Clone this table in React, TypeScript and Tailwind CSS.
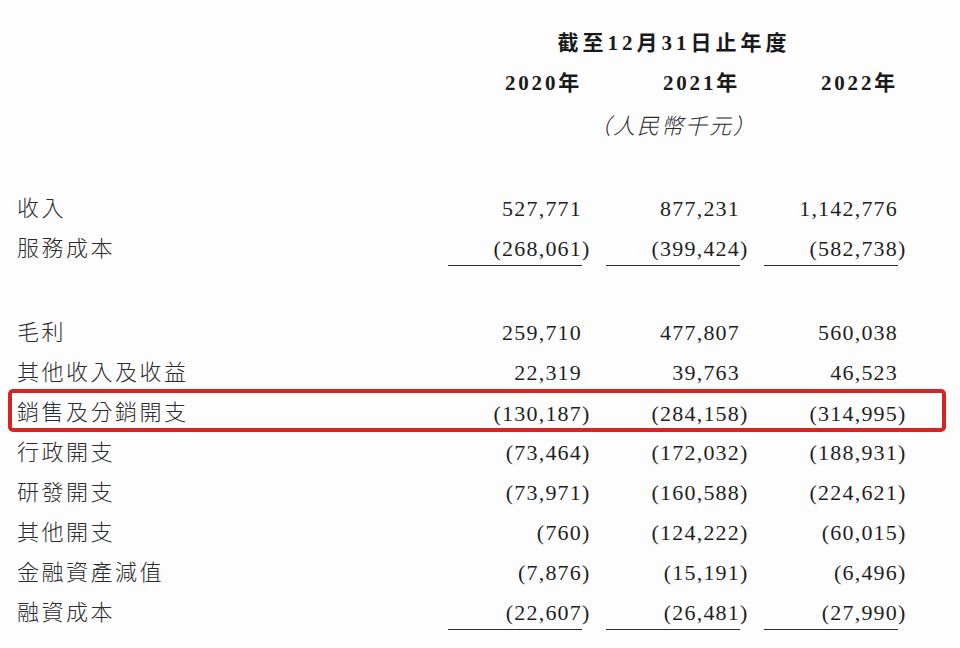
const serif = "font-['Liberation_Serif','Noto_Sans_CJK_TC',serif]";
const sans = "font-['Noto_Sans_CJK_TC','Noto_Sans_CJK_SC',sans-serif]";

type Row = {
  label: string;
  values: string[];
  underline?: boolean;
  highlight?: boolean;
};

const top: Row[] = [
  { label: "收入", values: ["527,771", "877,231", "1,142,776"] },
  { label: "服務成本", values: ["(268,061)", "(399,424)", "(582,738)"], underline: true },
];

const rest: Row[] = [
  { label: "毛利", values: ["259,710", "477,807", "560,038"] },
  { label: "其他收入及收益", values: ["22,319", "39,763", "46,523"] },
  { label: "銷售及分銷開支", values: ["(130,187)", "(284,158)", "(314,995)"], highlight: true },
  { label: "行政開支", values: ["(73,464)", "(172,032)", "(188,931)"] },
  { label: "研發開支", values: ["(73,971)", "(160,588)", "(224,621)"] },
  { label: "其他開支", values: ["(760)", "(124,222)", "(60,015)"] },
  { label: "金融資產減值", values: ["(7,876)", "(15,191)", "(6,496)"] },
  { label: "融資成本", values: ["(22,607)", "(26,481)", "(27,990)"], underline: true },
];

function Cell({ value, underline }: { value: string; underline?: boolean }) {
  const neg = value.endsWith(")");
  const num = neg ? value.slice(0, -1) : value;
  return (
    <div className="flex h-full">
      <div
        className={`flex w-[134px] items-center justify-end border-b-[1.5px] pt-[6px] ${
          underline ? "border-[#2a2a2a]" : "border-transparent"
        }`}
      >
        {num}
      </div>
      <div className="flex w-[8px] items-center border-b-[1.5px] border-transparent pt-[6px]">
        {neg ? ")" : ""}
      </div>
    </div>
  );
}

function DataRow({ row }: { row: Row }) {
  return (
    <div
      className={`flex items-center pl-[9px] ${
        row.highlight
          ? "-mt-px -mb-[2px] h-[43px] rounded-[5px] ring-4 ring-inset ring-[#d62424]"
          : "h-10"
      }`}
    >
      <div className={`w-[431px] ${sans} text-[22px] font-light tracking-[2.5px] text-[#2b2b2b]`}>
        {row.label}
      </div>
      <div className={`grid h-full grid-cols-3 gap-4 ${serif} text-[22px] tracking-[1.2px] text-[#1f1f1f]`}>
        {row.values.map((v, i) => (
          <Cell key={i} value={v} underline={row.underline} />
        ))}
      </div>
    </div>
  );
}

export default function App() {
  return (
    <div className="min-h-screen w-full bg-[#fdfdfe] pt-6">
      <div className="ml-2 w-[938px]">
        <div className="flex h-10 items-center pl-[9px]">
          <div className="w-[431px]" />
          <div className={`w-[458px] pr-[6px] text-center ${serif} text-[21px] font-bold tracking-[4px] text-[#1a1a1a]`}>
            截至12月31日止年度
          </div>
        </div>
        <div className="flex h-10 items-center pl-[9px]">
          <div className="w-[431px]" />
          <div className={`grid grid-cols-3 gap-4 ${serif} text-[21px] font-bold tracking-[2.8px] text-[#1a1a1a]`}>
            {["2020年", "2021年", "2022年"].map((y) => (
              <div key={y} className="w-[142px] pr-[8px] text-right">
                {y}
              </div>
            ))}
          </div>
        </div>
        <div className="flex h-10 items-center pl-[9px]">
          <div className="w-[431px]" />
          <div className={`w-[458px] pr-[8px] text-center ${sans} text-[22px] font-light italic tracking-[2px] text-[#2b2b2b]`}>
            （人民幣千元）
          </div>
        </div>

        <div className="mt-[42px]">
          {top.map((r) => (
            <DataRow key={r.label} row={r} />
          ))}
        </div>
        <div className="mt-[44px]">
          {rest.map((r) => (
            <DataRow key={r.label} row={r} />
          ))}
        </div>
      </div>
    </div>
  );
}
